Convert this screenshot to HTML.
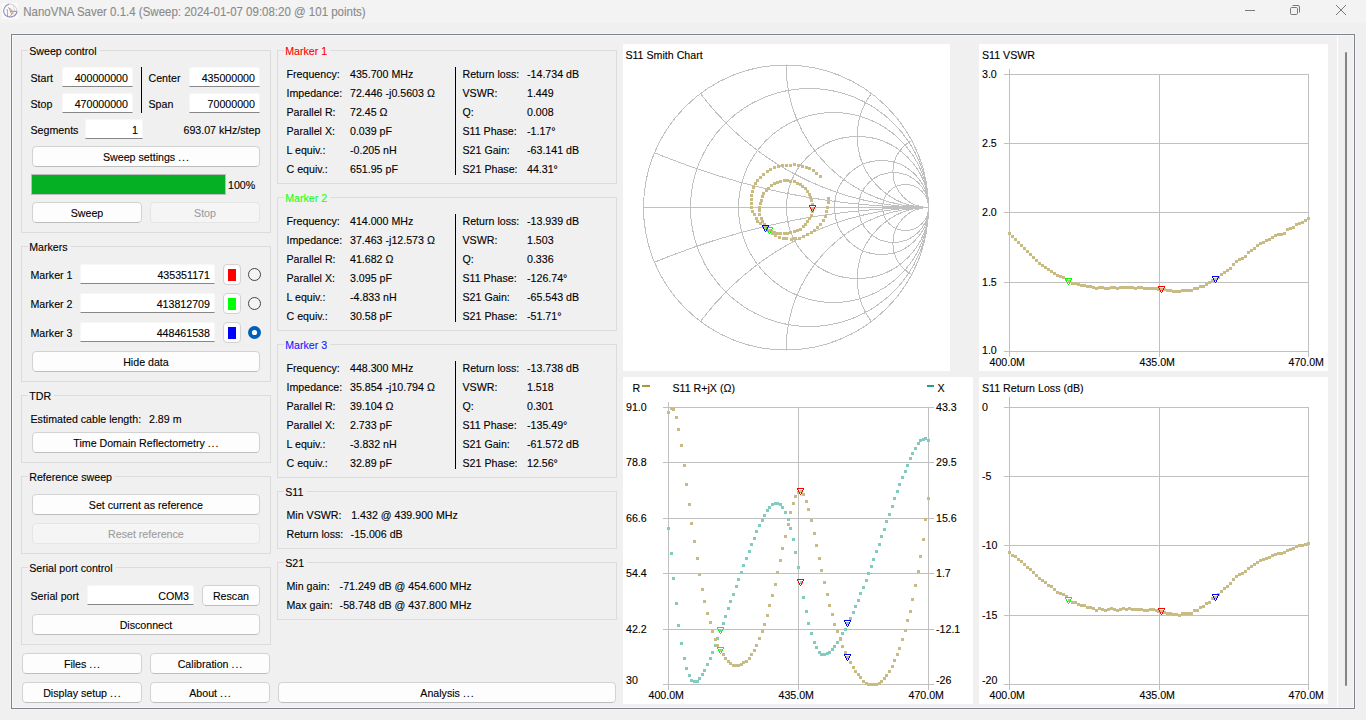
<!DOCTYPE html>
<html><head><meta charset="utf-8"><title>NanoVNA Saver</title>
<style>html,body{margin:0;padding:0;background:#f0f0f0;overflow:hidden}svg{display:block}text{font-family:"Liberation Sans",sans-serif;white-space:pre}</style>
</head><body><svg width="1366" height="720" viewBox="0 0 1366 720"><rect x="0" y="0" width="1366" height="720" fill="#f0f0f0" /><rect x="0" y="0" width="1366" height="23" fill="#f3f3f3" /><g><rect x="2" y="3" width="16" height="16" fill="#fbfbfb" /><path d="M4.2 13.5 A7 7 0 0 1 9 4.1" fill="none" stroke="#9a92c0" stroke-width="1.1"/><path d="M9 4.1 A7 7 0 0 1 17 12" fill="none" stroke="#cfcfcf" stroke-width="1"/><path d="M17 12 A7 7 0 0 1 4.2 13.5" fill="none" stroke="#8c84b4" stroke-width="1.1"/><path d="M10 11.3 H17" stroke="#8c8c8c" stroke-width="1"/><path d="M7 9 Q8 12 7.5 16.5 M8 7.5 Q11 8.5 13 12 Q12 15 9 17" fill="none" stroke="#9a92c0" stroke-width="0.9"/><path d="M13 5.5 Q15 8 14 11 M13 11.3 Q15 14 13.5 17" fill="none" stroke="#d0d0d0" stroke-width="0.9"/><path d="M9.6 8 L10.2 11 L11.8 14.6" fill="none" stroke="#ec9060" stroke-width="1"/></g><text transform="translate(23.30,16.00) scale(0.935,1)" font-size="12.3" fill="#8a8a8a" stroke="#8a8a8a" stroke-width="0.12" >NanoVNA Saver 0.1.4 (Sweep: 2024-01-07 09:08:20 @ 101 points)</text><line x1="1245" y1="10.5" x2="1255" y2="10.5" stroke="#7a7a7a" stroke-width="1"/><rect x="1290.5" y="7.5" width="7" height="7" rx="1.2" fill="none" stroke="#7a7a7a" stroke-width="1"/><path d="M1292.5 5.5 H1298 Q1299.5 5.5 1299.5 7 V12.5" fill="none" stroke="#7a7a7a" stroke-width="1"/><path d="M1336 5 L1346 15 M1346 5 L1336 15" stroke="#7a7a7a" stroke-width="1"/><rect x="11.5" y="34.5" width="1343" height="674" fill="none" stroke="#7e838d" stroke-width="1"/><rect x="21.5" y="50.5" width="249" height="182" fill="none" stroke="#dcdcdc" stroke-width="1"/><rect x="28" y="48" width="71.74141968750001" height="5" fill="#f0f0f0" /><text transform="translate(29.20,55.00) scale(0.935,1)" font-size="11.4" fill="#000" stroke="#000" stroke-width="0.12" >Sweep control</text><text transform="translate(30.50,82.00) scale(0.935,1)" font-size="11.4" fill="#000" stroke="#000" stroke-width="0.12" >Start</text><rect x="62" y="67" width="71" height="20" rx="3" fill="#fff"/><rect x="62.5" y="67.5" width="70" height="19" rx="2.5" fill="none" stroke="#f7f7f7" stroke-width="1"/><line x1="62.5" y1="86.5" x2="132.5" y2="86.5" stroke="#878787" stroke-width="1"/><text transform="translate(74.65,81.50) scale(0.935,1)" font-size="11.4" fill="#000" stroke="#000" stroke-width="0.12" >400000000</text><text transform="translate(30.50,108.00) scale(0.935,1)" font-size="11.4" fill="#000" stroke="#000" stroke-width="0.12" >Stop</text><rect x="62" y="93" width="71" height="20" rx="3" fill="#fff"/><rect x="62.5" y="93.5" width="70" height="19" rx="2.5" fill="none" stroke="#f7f7f7" stroke-width="1"/><line x1="62.5" y1="112.5" x2="132.5" y2="112.5" stroke="#878787" stroke-width="1"/><text transform="translate(74.65,107.50) scale(0.935,1)" font-size="11.4" fill="#000" stroke="#000" stroke-width="0.12" >470000000</text><rect x="141" y="67" width="1" height="46" fill="#000" /><text transform="translate(148.50,82.00) scale(0.935,1)" font-size="11.4" fill="#000" stroke="#000" stroke-width="0.12" >Center</text><rect x="189" y="67" width="71" height="20" rx="3" fill="#fff"/><rect x="189.5" y="67.5" width="70" height="19" rx="2.5" fill="none" stroke="#f7f7f7" stroke-width="1"/><line x1="189.5" y1="86.5" x2="259.5" y2="86.5" stroke="#878787" stroke-width="1"/><text transform="translate(201.65,81.50) scale(0.935,1)" font-size="11.4" fill="#000" stroke="#000" stroke-width="0.12" >435000000</text><text transform="translate(148.50,108.00) scale(0.935,1)" font-size="11.4" fill="#000" stroke="#000" stroke-width="0.12" >Span</text><rect x="189" y="93" width="71" height="20" rx="3" fill="#fff"/><rect x="189.5" y="93.5" width="70" height="19" rx="2.5" fill="none" stroke="#f7f7f7" stroke-width="1"/><line x1="189.5" y1="112.5" x2="259.5" y2="112.5" stroke="#878787" stroke-width="1"/><text transform="translate(207.58,107.50) scale(0.935,1)" font-size="11.4" fill="#000" stroke="#000" stroke-width="0.12" >70000000</text><text transform="translate(30.50,134.00) scale(0.935,1)" font-size="11.4" fill="#000" stroke="#000" stroke-width="0.12" >Segments</text><rect x="85" y="119" width="58" height="20" rx="3" fill="#fff"/><rect x="85.5" y="119.5" width="57" height="19" rx="2.5" fill="none" stroke="#f7f7f7" stroke-width="1"/><line x1="85.5" y1="138.5" x2="142.5" y2="138.5" stroke="#878787" stroke-width="1"/><text transform="translate(132.07,133.50) scale(0.935,1)" font-size="11.4" fill="#000" stroke="#000" stroke-width="0.12" >1</text><text transform="translate(183.48,134.00) scale(0.935,1)" font-size="11.4" fill="#000" stroke="#000" stroke-width="0.12" >693.07 kHz/step</text><rect x="32.5" y="146.5" width="227" height="20" rx="3.5" fill="#fdfdfd" stroke="#d2d2d2" stroke-width="1"/><path d="M35 166.5 H257" stroke="#bdbdbd" stroke-width="1"/><text transform="translate(103.00,160.70) scale(0.935,1)" font-size="11.4" fill="#000" stroke="#000" stroke-width="0.12" >Sweep settings <tspan letter-spacing="1.0">..</tspan>.</text><rect x="31.5" y="174.5" width="194" height="20" fill="#06b025" stroke="#bcbcbc" stroke-width="1"/><text transform="translate(228.00,189.00) scale(0.935,1)" font-size="11.4" fill="#000" stroke="#000" stroke-width="0.12" >100%</text><rect x="32.5" y="202.5" width="109" height="20" rx="3.5" fill="#fdfdfd" stroke="#d2d2d2" stroke-width="1"/><path d="M35 222.5 H139" stroke="#bdbdbd" stroke-width="1"/><text transform="translate(70.71,216.70) scale(0.935,1)" font-size="11.4" fill="#000" stroke="#000" stroke-width="0.12" >Sweep</text><rect x="150.5" y="202.5" width="109" height="20" rx="3.5" fill="#f5f5f5" stroke="#e5e5e5" stroke-width="1"/><text transform="translate(194.04,216.70) scale(0.935,1)" font-size="11.4" fill="#9d9d9d" stroke="#9d9d9d" stroke-width="0.12" >Stop</text><rect x="21.5" y="246.5" width="249" height="135" fill="none" stroke="#dcdcdc" stroke-width="1"/><rect x="28" y="244" width="42.690648281250006" height="5" fill="#f0f0f0" /><text transform="translate(29.20,251.00) scale(0.935,1)" font-size="11.4" fill="#000" stroke="#000" stroke-width="0.12" >Markers</text><text transform="translate(30.50,279.00) scale(0.935,1)" font-size="11.4" fill="#000" stroke="#000" stroke-width="0.12" >Marker 1</text><rect x="80" y="264" width="135" height="20" rx="3" fill="#fff"/><rect x="80.5" y="264.5" width="134" height="19" rx="2.5" fill="none" stroke="#f7f7f7" stroke-width="1"/><line x1="80.5" y1="283.5" x2="214.5" y2="283.5" stroke="#878787" stroke-width="1"/><text transform="translate(157.44,278.50) scale(0.935,1)" font-size="11.4" fill="#000" stroke="#000" stroke-width="0.12" >435351171</text><rect x="223.5" y="264.5" width="17" height="20" rx="3.5" fill="#fdfdfd" stroke="#d2d2d2" stroke-width="1"/><rect x="228" y="269" width="8" height="12" fill="#ff0000" /><circle cx="254.5" cy="274.5" r="6" fill="#fff" fill-opacity="0.3" stroke="#444" stroke-width="1"/><text transform="translate(30.50,308.00) scale(0.935,1)" font-size="11.4" fill="#000" stroke="#000" stroke-width="0.12" >Marker 2</text><rect x="80" y="293" width="135" height="20" rx="3" fill="#fff"/><rect x="80.5" y="293.5" width="134" height="19" rx="2.5" fill="none" stroke="#f7f7f7" stroke-width="1"/><line x1="80.5" y1="312.5" x2="214.5" y2="312.5" stroke="#878787" stroke-width="1"/><text transform="translate(156.65,307.50) scale(0.935,1)" font-size="11.4" fill="#000" stroke="#000" stroke-width="0.12" >413812709</text><rect x="223.5" y="293.5" width="17" height="20" rx="3.5" fill="#fdfdfd" stroke="#d2d2d2" stroke-width="1"/><rect x="228" y="298" width="8" height="12" fill="#00ff00" /><circle cx="254.5" cy="303.5" r="6" fill="#fff" fill-opacity="0.3" stroke="#444" stroke-width="1"/><text transform="translate(30.50,337.00) scale(0.935,1)" font-size="11.4" fill="#000" stroke="#000" stroke-width="0.12" >Marker 3</text><rect x="80" y="322" width="135" height="20" rx="3" fill="#fff"/><rect x="80.5" y="322.5" width="134" height="19" rx="2.5" fill="none" stroke="#f7f7f7" stroke-width="1"/><line x1="80.5" y1="341.5" x2="214.5" y2="341.5" stroke="#878787" stroke-width="1"/><text transform="translate(156.65,336.50) scale(0.935,1)" font-size="11.4" fill="#000" stroke="#000" stroke-width="0.12" >448461538</text><rect x="223.5" y="322.5" width="17" height="20" rx="3.5" fill="#fdfdfd" stroke="#d2d2d2" stroke-width="1"/><rect x="228" y="327" width="8" height="12" fill="#0000ff" /><circle cx="254.5" cy="332.5" r="6.5" fill="#005fb8"/><circle cx="254.5" cy="332.5" r="2.6" fill="#fff"/><rect x="32.5" y="351.5" width="227" height="20" rx="3.5" fill="#fdfdfd" stroke="#d2d2d2" stroke-width="1"/><path d="M35 371.5 H257" stroke="#bdbdbd" stroke-width="1"/><text transform="translate(123.19,365.70) scale(0.935,1)" font-size="11.4" fill="#000" stroke="#000" stroke-width="0.12" >Hide data</text><rect x="21.5" y="395.5" width="249" height="67" fill="none" stroke="#dcdcdc" stroke-width="1"/><rect x="28" y="393" width="26.105910468749997" height="5" fill="#f0f0f0" /><text transform="translate(29.20,400.00) scale(0.935,1)" font-size="11.4" fill="#000" stroke="#000" stroke-width="0.12" >TDR</text><text transform="translate(30.50,422.50) scale(0.935,1)" font-size="11.4" fill="#000" stroke="#000" stroke-width="0.12" >Estimated cable length:</text><text transform="translate(149.00,422.50) scale(0.935,1)" font-size="11.4" fill="#000" stroke="#000" stroke-width="0.12" >2.89 m</text><rect x="32.5" y="432.5" width="227" height="20" rx="3.5" fill="#fdfdfd" stroke="#d2d2d2" stroke-width="1"/><path d="M35 452.5 H257" stroke="#bdbdbd" stroke-width="1"/><text transform="translate(73.30,446.70) scale(0.935,1)" font-size="11.4" fill="#000" stroke="#000" stroke-width="0.12" >Time Domain Reflectometry <tspan letter-spacing="1.0">..</tspan>.</text><rect x="21.5" y="476.5" width="249" height="77" fill="none" stroke="#dcdcdc" stroke-width="1"/><rect x="28" y="474" width="87.14534015625001" height="5" fill="#f0f0f0" /><text transform="translate(29.20,481.00) scale(0.935,1)" font-size="11.4" fill="#000" stroke="#000" stroke-width="0.12" >Reference sweep</text><rect x="32.5" y="494.5" width="227" height="20" rx="3.5" fill="#fdfdfd" stroke="#d2d2d2" stroke-width="1"/><path d="M35 514.5 H257" stroke="#bdbdbd" stroke-width="1"/><text transform="translate(88.83,508.70) scale(0.935,1)" font-size="11.4" fill="#000" stroke="#000" stroke-width="0.12" >Set current as reference</text><rect x="32.5" y="523.5" width="227" height="20" rx="3.5" fill="#f5f5f5" stroke="#e5e5e5" stroke-width="1"/><text transform="translate(108.08,537.70) scale(0.935,1)" font-size="11.4" fill="#9d9d9d" stroke="#9d9d9d" stroke-width="0.12" >Reset reference</text><rect x="21.5" y="567.5" width="249" height="77" fill="none" stroke="#dcdcdc" stroke-width="1"/><rect x="28" y="565" width="87.72825421875002" height="5" fill="#f0f0f0" /><text transform="translate(29.20,572.00) scale(0.935,1)" font-size="11.4" fill="#000" stroke="#000" stroke-width="0.12" >Serial port control</text><text transform="translate(30.50,600.00) scale(0.935,1)" font-size="11.4" fill="#000" stroke="#000" stroke-width="0.12" >Serial port</text><rect x="87" y="585" width="107" height="20" rx="3" fill="#fff"/><rect x="87.5" y="585.5" width="106" height="19" rx="2.5" fill="none" stroke="#f7f7f7" stroke-width="1"/><line x1="87.5" y1="604.5" x2="193.5" y2="604.5" stroke="#878787" stroke-width="1"/><text transform="translate(158.21,599.50) scale(0.935,1)" font-size="11.4" fill="#000" stroke="#000" stroke-width="0.12" >COM3</text><rect x="202.5" y="585.5" width="57" height="20" rx="3.5" fill="#fdfdfd" stroke="#d2d2d2" stroke-width="1"/><path d="M205 605.5 H257" stroke="#bdbdbd" stroke-width="1"/><text transform="translate(212.93,599.70) scale(0.935,1)" font-size="11.4" fill="#000" stroke="#000" stroke-width="0.12" >Rescan</text><rect x="32.5" y="614.5" width="227" height="20" rx="3.5" fill="#fdfdfd" stroke="#d2d2d2" stroke-width="1"/><path d="M35 634.5 H257" stroke="#bdbdbd" stroke-width="1"/><text transform="translate(119.64,628.70) scale(0.935,1)" font-size="11.4" fill="#000" stroke="#000" stroke-width="0.12" >Disconnect</text><rect x="22.5" y="653.5" width="119" height="20" rx="3.5" fill="#fdfdfd" stroke="#d2d2d2" stroke-width="1"/><path d="M25 673.5 H139" stroke="#bdbdbd" stroke-width="1"/><text transform="translate(63.89,667.70) scale(0.935,1)" font-size="11.4" fill="#000" stroke="#000" stroke-width="0.12" >Files <tspan letter-spacing="1.0">..</tspan>.</text><rect x="150.5" y="653.5" width="119" height="20" rx="3.5" fill="#fdfdfd" stroke="#d2d2d2" stroke-width="1"/><path d="M153 673.5 H267" stroke="#bdbdbd" stroke-width="1"/><text transform="translate(177.67,667.70) scale(0.935,1)" font-size="11.4" fill="#000" stroke="#000" stroke-width="0.12" >Calibration <tspan letter-spacing="1.0">..</tspan>.</text><rect x="22.5" y="682.5" width="119" height="20" rx="3.5" fill="#fdfdfd" stroke="#d2d2d2" stroke-width="1"/><path d="M25 702.5 H139" stroke="#bdbdbd" stroke-width="1"/><text transform="translate(43.15,696.70) scale(0.935,1)" font-size="11.4" fill="#000" stroke="#000" stroke-width="0.12" >Display setup <tspan letter-spacing="1.0">..</tspan>.</text><rect x="150.5" y="682.5" width="119" height="20" rx="3.5" fill="#fdfdfd" stroke="#d2d2d2" stroke-width="1"/><path d="M153 702.5 H267" stroke="#bdbdbd" stroke-width="1"/><text transform="translate(189.22,696.70) scale(0.935,1)" font-size="11.4" fill="#000" stroke="#000" stroke-width="0.12" >About <tspan letter-spacing="1.0">..</tspan>.</text><rect x="277.5" y="50.5" width="339" height="133" fill="none" stroke="#dcdcdc" stroke-width="1"/><rect x="284" y="48" width="46.24975499999999" height="5" fill="#f0f0f0" /><text transform="translate(285.20,55.00) scale(0.935,1)" font-size="11.4" fill="#ff0000" stroke="#ff0000" stroke-width="0.12" >Marker 1</text><rect x="455" y="67" width="1" height="108" fill="#000" /><text transform="translate(286.50,78.00) scale(0.935,1)" font-size="11.4" fill="#000" stroke="#000" stroke-width="0.12" >Frequency:</text><text transform="translate(350.00,78.00) scale(0.935,1)" font-size="11.4" fill="#000" stroke="#000" stroke-width="0.12" >435.700 MHz</text><text transform="translate(286.50,97.00) scale(0.935,1)" font-size="11.4" fill="#000" stroke="#000" stroke-width="0.12" >Impedance:</text><text transform="translate(350.00,97.00) scale(0.935,1)" font-size="11.4" fill="#000" stroke="#000" stroke-width="0.12" >72.446 -j0.5603 Ω</text><text transform="translate(286.50,116.00) scale(0.935,1)" font-size="11.4" fill="#000" stroke="#000" stroke-width="0.12" >Parallel R:</text><text transform="translate(350.00,116.00) scale(0.935,1)" font-size="11.4" fill="#000" stroke="#000" stroke-width="0.12" >72.45 Ω</text><text transform="translate(286.50,135.00) scale(0.935,1)" font-size="11.4" fill="#000" stroke="#000" stroke-width="0.12" >Parallel X:</text><text transform="translate(350.00,135.00) scale(0.935,1)" font-size="11.4" fill="#000" stroke="#000" stroke-width="0.12" >0.039 pF</text><text transform="translate(286.50,154.00) scale(0.935,1)" font-size="11.4" fill="#000" stroke="#000" stroke-width="0.12" >L equiv.:</text><text transform="translate(350.00,154.00) scale(0.935,1)" font-size="11.4" fill="#000" stroke="#000" stroke-width="0.12" >-0.205 nH</text><text transform="translate(286.50,173.00) scale(0.935,1)" font-size="11.4" fill="#000" stroke="#000" stroke-width="0.12" >C equiv.:</text><text transform="translate(350.00,173.00) scale(0.935,1)" font-size="11.4" fill="#000" stroke="#000" stroke-width="0.12" >651.95 pF</text><text transform="translate(462.50,78.00) scale(0.935,1)" font-size="11.4" fill="#000" stroke="#000" stroke-width="0.12" >Return loss:</text><text transform="translate(527.00,78.00) scale(0.935,1)" font-size="11.4" fill="#000" stroke="#000" stroke-width="0.12" >-14.734 dB</text><text transform="translate(462.50,97.00) scale(0.935,1)" font-size="11.4" fill="#000" stroke="#000" stroke-width="0.12" >VSWR:</text><text transform="translate(527.00,97.00) scale(0.935,1)" font-size="11.4" fill="#000" stroke="#000" stroke-width="0.12" >1.449</text><text transform="translate(462.50,116.00) scale(0.935,1)" font-size="11.4" fill="#000" stroke="#000" stroke-width="0.12" >Q:</text><text transform="translate(527.00,116.00) scale(0.935,1)" font-size="11.4" fill="#000" stroke="#000" stroke-width="0.12" >0.008</text><text transform="translate(462.50,135.00) scale(0.935,1)" font-size="11.4" fill="#000" stroke="#000" stroke-width="0.12" >S11 Phase:</text><text transform="translate(527.00,135.00) scale(0.935,1)" font-size="11.4" fill="#000" stroke="#000" stroke-width="0.12" >-1.17°</text><text transform="translate(462.50,154.00) scale(0.935,1)" font-size="11.4" fill="#000" stroke="#000" stroke-width="0.12" >S21 Gain:</text><text transform="translate(527.00,154.00) scale(0.935,1)" font-size="11.4" fill="#000" stroke="#000" stroke-width="0.12" >-63.141 dB</text><text transform="translate(462.50,173.00) scale(0.935,1)" font-size="11.4" fill="#000" stroke="#000" stroke-width="0.12" >S21 Phase:</text><text transform="translate(527.00,173.00) scale(0.935,1)" font-size="11.4" fill="#000" stroke="#000" stroke-width="0.12" >44.31°</text><rect x="277.5" y="197.5" width="339" height="133" fill="none" stroke="#dcdcdc" stroke-width="1"/><rect x="284" y="195" width="46.24975499999999" height="5" fill="#f0f0f0" /><text transform="translate(285.20,202.00) scale(0.935,1)" font-size="11.4" fill="#1aff1a" stroke="#1aff1a" stroke-width="0.12" >Marker 2</text><rect x="455" y="214" width="1" height="108" fill="#000" /><text transform="translate(286.50,225.00) scale(0.935,1)" font-size="11.4" fill="#000" stroke="#000" stroke-width="0.12" >Frequency:</text><text transform="translate(350.00,225.00) scale(0.935,1)" font-size="11.4" fill="#000" stroke="#000" stroke-width="0.12" >414.000 MHz</text><text transform="translate(286.50,244.00) scale(0.935,1)" font-size="11.4" fill="#000" stroke="#000" stroke-width="0.12" >Impedance:</text><text transform="translate(350.00,244.00) scale(0.935,1)" font-size="11.4" fill="#000" stroke="#000" stroke-width="0.12" >37.463 -j12.573 Ω</text><text transform="translate(286.50,263.00) scale(0.935,1)" font-size="11.4" fill="#000" stroke="#000" stroke-width="0.12" >Parallel R:</text><text transform="translate(350.00,263.00) scale(0.935,1)" font-size="11.4" fill="#000" stroke="#000" stroke-width="0.12" >41.682 Ω</text><text transform="translate(286.50,282.00) scale(0.935,1)" font-size="11.4" fill="#000" stroke="#000" stroke-width="0.12" >Parallel X:</text><text transform="translate(350.00,282.00) scale(0.935,1)" font-size="11.4" fill="#000" stroke="#000" stroke-width="0.12" >3.095 pF</text><text transform="translate(286.50,301.00) scale(0.935,1)" font-size="11.4" fill="#000" stroke="#000" stroke-width="0.12" >L equiv.:</text><text transform="translate(350.00,301.00) scale(0.935,1)" font-size="11.4" fill="#000" stroke="#000" stroke-width="0.12" >-4.833 nH</text><text transform="translate(286.50,320.00) scale(0.935,1)" font-size="11.4" fill="#000" stroke="#000" stroke-width="0.12" >C equiv.:</text><text transform="translate(350.00,320.00) scale(0.935,1)" font-size="11.4" fill="#000" stroke="#000" stroke-width="0.12" >30.58 pF</text><text transform="translate(462.50,225.00) scale(0.935,1)" font-size="11.4" fill="#000" stroke="#000" stroke-width="0.12" >Return loss:</text><text transform="translate(527.00,225.00) scale(0.935,1)" font-size="11.4" fill="#000" stroke="#000" stroke-width="0.12" >-13.939 dB</text><text transform="translate(462.50,244.00) scale(0.935,1)" font-size="11.4" fill="#000" stroke="#000" stroke-width="0.12" >VSWR:</text><text transform="translate(527.00,244.00) scale(0.935,1)" font-size="11.4" fill="#000" stroke="#000" stroke-width="0.12" >1.503</text><text transform="translate(462.50,263.00) scale(0.935,1)" font-size="11.4" fill="#000" stroke="#000" stroke-width="0.12" >Q:</text><text transform="translate(527.00,263.00) scale(0.935,1)" font-size="11.4" fill="#000" stroke="#000" stroke-width="0.12" >0.336</text><text transform="translate(462.50,282.00) scale(0.935,1)" font-size="11.4" fill="#000" stroke="#000" stroke-width="0.12" >S11 Phase:</text><text transform="translate(527.00,282.00) scale(0.935,1)" font-size="11.4" fill="#000" stroke="#000" stroke-width="0.12" >-126.74°</text><text transform="translate(462.50,301.00) scale(0.935,1)" font-size="11.4" fill="#000" stroke="#000" stroke-width="0.12" >S21 Gain:</text><text transform="translate(527.00,301.00) scale(0.935,1)" font-size="11.4" fill="#000" stroke="#000" stroke-width="0.12" >-65.543 dB</text><text transform="translate(462.50,320.00) scale(0.935,1)" font-size="11.4" fill="#000" stroke="#000" stroke-width="0.12" >S21 Phase:</text><text transform="translate(527.00,320.00) scale(0.935,1)" font-size="11.4" fill="#000" stroke="#000" stroke-width="0.12" >-51.71°</text><rect x="277.5" y="344.5" width="339" height="133" fill="none" stroke="#dcdcdc" stroke-width="1"/><rect x="284" y="342" width="46.24975499999999" height="5" fill="#f0f0f0" /><text transform="translate(285.20,349.00) scale(0.935,1)" font-size="11.4" fill="#1a1aff" stroke="#1a1aff" stroke-width="0.12" >Marker 3</text><rect x="455" y="361" width="1" height="108" fill="#000" /><text transform="translate(286.50,372.00) scale(0.935,1)" font-size="11.4" fill="#000" stroke="#000" stroke-width="0.12" >Frequency:</text><text transform="translate(350.00,372.00) scale(0.935,1)" font-size="11.4" fill="#000" stroke="#000" stroke-width="0.12" >448.300 MHz</text><text transform="translate(286.50,391.00) scale(0.935,1)" font-size="11.4" fill="#000" stroke="#000" stroke-width="0.12" >Impedance:</text><text transform="translate(350.00,391.00) scale(0.935,1)" font-size="11.4" fill="#000" stroke="#000" stroke-width="0.12" >35.854 -j10.794 Ω</text><text transform="translate(286.50,410.00) scale(0.935,1)" font-size="11.4" fill="#000" stroke="#000" stroke-width="0.12" >Parallel R:</text><text transform="translate(350.00,410.00) scale(0.935,1)" font-size="11.4" fill="#000" stroke="#000" stroke-width="0.12" >39.104 Ω</text><text transform="translate(286.50,429.00) scale(0.935,1)" font-size="11.4" fill="#000" stroke="#000" stroke-width="0.12" >Parallel X:</text><text transform="translate(350.00,429.00) scale(0.935,1)" font-size="11.4" fill="#000" stroke="#000" stroke-width="0.12" >2.733 pF</text><text transform="translate(286.50,448.00) scale(0.935,1)" font-size="11.4" fill="#000" stroke="#000" stroke-width="0.12" >L equiv.:</text><text transform="translate(350.00,448.00) scale(0.935,1)" font-size="11.4" fill="#000" stroke="#000" stroke-width="0.12" >-3.832 nH</text><text transform="translate(286.50,467.00) scale(0.935,1)" font-size="11.4" fill="#000" stroke="#000" stroke-width="0.12" >C equiv.:</text><text transform="translate(350.00,467.00) scale(0.935,1)" font-size="11.4" fill="#000" stroke="#000" stroke-width="0.12" >32.89 pF</text><text transform="translate(462.50,372.00) scale(0.935,1)" font-size="11.4" fill="#000" stroke="#000" stroke-width="0.12" >Return loss:</text><text transform="translate(527.00,372.00) scale(0.935,1)" font-size="11.4" fill="#000" stroke="#000" stroke-width="0.12" >-13.738 dB</text><text transform="translate(462.50,391.00) scale(0.935,1)" font-size="11.4" fill="#000" stroke="#000" stroke-width="0.12" >VSWR:</text><text transform="translate(527.00,391.00) scale(0.935,1)" font-size="11.4" fill="#000" stroke="#000" stroke-width="0.12" >1.518</text><text transform="translate(462.50,410.00) scale(0.935,1)" font-size="11.4" fill="#000" stroke="#000" stroke-width="0.12" >Q:</text><text transform="translate(527.00,410.00) scale(0.935,1)" font-size="11.4" fill="#000" stroke="#000" stroke-width="0.12" >0.301</text><text transform="translate(462.50,429.00) scale(0.935,1)" font-size="11.4" fill="#000" stroke="#000" stroke-width="0.12" >S11 Phase:</text><text transform="translate(527.00,429.00) scale(0.935,1)" font-size="11.4" fill="#000" stroke="#000" stroke-width="0.12" >-135.49°</text><text transform="translate(462.50,448.00) scale(0.935,1)" font-size="11.4" fill="#000" stroke="#000" stroke-width="0.12" >S21 Gain:</text><text transform="translate(527.00,448.00) scale(0.935,1)" font-size="11.4" fill="#000" stroke="#000" stroke-width="0.12" >-61.572 dB</text><text transform="translate(462.50,467.00) scale(0.935,1)" font-size="11.4" fill="#000" stroke="#000" stroke-width="0.12" >S21 Phase:</text><text transform="translate(527.00,467.00) scale(0.935,1)" font-size="11.4" fill="#000" stroke="#000" stroke-width="0.12" >12.56°</text><rect x="277.5" y="491.5" width="339" height="57" fill="none" stroke="#dcdcdc" stroke-width="1"/><rect x="284" y="489" width="22.373594999999966" height="5" fill="#f0f0f0" /><text transform="translate(285.20,496.00) scale(0.935,1)" font-size="11.4" fill="#000" stroke="#000" stroke-width="0.12" >S11</text><text transform="translate(286.50,519.00) scale(0.935,1)" font-size="11.4" fill="#000" stroke="#000" stroke-width="0.12" >Min VSWR:</text><text transform="translate(351.20,519.00) scale(0.935,1)" font-size="11.4" fill="#000" stroke="#000" stroke-width="0.12" >1.432 @ 439.900 MHz</text><text transform="translate(286.50,538.00) scale(0.935,1)" font-size="11.4" fill="#000" stroke="#000" stroke-width="0.12" >Return loss:</text><text transform="translate(350.60,538.00) scale(0.935,1)" font-size="11.4" fill="#000" stroke="#000" stroke-width="0.12" >-15.006 dB</text><rect x="277.5" y="562.5" width="339" height="57" fill="none" stroke="#dcdcdc" stroke-width="1"/><rect x="284" y="560" width="23.164692656249997" height="5" fill="#f0f0f0" /><text transform="translate(285.20,567.00) scale(0.935,1)" font-size="11.4" fill="#000" stroke="#000" stroke-width="0.12" >S21</text><text transform="translate(286.50,590.00) scale(0.935,1)" font-size="11.4" fill="#000" stroke="#000" stroke-width="0.12" >Min gain:</text><text transform="translate(339.60,590.00) scale(0.935,1)" font-size="11.4" fill="#000" stroke="#000" stroke-width="0.12" >-71.249 dB @ 454.600 MHz</text><text transform="translate(286.50,609.00) scale(0.935,1)" font-size="11.4" fill="#000" stroke="#000" stroke-width="0.12" >Max gain:</text><text transform="translate(339.60,609.00) scale(0.935,1)" font-size="11.4" fill="#000" stroke="#000" stroke-width="0.12" >-58.748 dB @ 437.800 MHz</text><rect x="278.5" y="682.5" width="337" height="20" rx="3.5" fill="#fdfdfd" stroke="#d2d2d2" stroke-width="1"/><path d="M281 702.5 H613" stroke="#bdbdbd" stroke-width="1"/><text transform="translate(420.30,696.70) scale(0.935,1)" font-size="11.4" fill="#000" stroke="#000" stroke-width="0.12" >Analysis <tspan letter-spacing="1.0">..</tspan>.</text><rect x="623" y="44" width="327" height="327" fill="#fff" /><text transform="translate(625.40,59.00) scale(0.935,1)" font-size="11.4" fill="#000" stroke="#000" stroke-width="0.12" >S11 Smith Chart</text><defs><clipPath id="sc"><circle cx="786.0" cy="207.5" r="143.0"/></clipPath></defs><g fill="none" stroke="#c0c0c0" stroke-width="1" shape-rendering="crispEdges"><line x1="643.5" y1="207.5" x2="928.5" y2="207.5"/><circle cx="786.00" cy="207.5" r="142.50"/><circle cx="809.50" cy="207.5" r="119.00"/><circle cx="833.50" cy="207.5" r="95.00"/><circle cx="857.50" cy="207.5" r="71.00"/><circle cx="881.50" cy="207.5" r="47.00"/><circle cx="893.50" cy="207.5" r="35.00"/><circle cx="905.50" cy="207.5" r="23.00"/><g clip-path="url(#sc)"><circle cx="928.5" cy="-505.00" r="712.50"/><circle cx="928.5" cy="920.00" r="712.50"/><circle cx="928.5" cy="-77.50" r="285.00"/><circle cx="928.5" cy="492.50" r="285.00"/><circle cx="928.5" cy="65.00" r="142.50"/><circle cx="928.5" cy="350.00" r="142.50"/><circle cx="928.5" cy="136.25" r="71.25"/><circle cx="928.5" cy="278.75" r="71.25"/><circle cx="928.5" cy="171.88" r="35.62"/><circle cx="928.5" cy="243.12" r="35.62"/></g></g><path d="M827 197h3v3h-3zM827 201h3v3h-3zM826 206h3v3h-3zM825 210h3v3h-3zM824 215h3v3h-3zM822 219h3v3h-3zM819 223h3v3h-3zM816 226h3v3h-3zM813 229h3v3h-3zM810 231h3v3h-3zM806 233h3v3h-3zM802 235h3v3h-3zM798 237h3v3h-3zM794 237h3v3h-3zM790 238h3v3h-3zM785 237h3v3h-3zM782 237h3v3h-3zM778 236h3v3h-3zM774 234h3v3h-3zM771 232h3v3h-3zM768 229h3v3h-3zM765 226h3v3h-3zM763 223h3v3h-3zM761 220h3v3h-3zM760 217h3v3h-3zM758 213h3v3h-3zM758 209h3v3h-3zM758 206h3v3h-3zM759 202h3v3h-3zM760 199h3v3h-3zM761 195h3v3h-3zM762 192h3v3h-3zM765 189h3v3h-3zM767 187h3v3h-3zM770 184h3v3h-3zM773 182h3v3h-3zM776 181h3v3h-3zM779 180h3v3h-3zM783 179h3v3h-3zM786 179h3v3h-3zM789 180h3v3h-3zM793 180h3v3h-3zM796 182h3v3h-3zM799 183h3v3h-3zM801 185h3v3h-3zM804 187h3v3h-3zM806 190h3v3h-3zM808 193h3v3h-3zM809 196h3v3h-3zM810 199h3v3h-3zM811 203h3v3h-3zM811 207h3v3h-3zM811 210h3v3h-3zM810 214h3v3h-3zM808 217h3v3h-3zM806 220h3v3h-3zM804 223h3v3h-3zM802 225h3v3h-3zM799 228h3v3h-3zM796 229h3v3h-3zM793 230h3v3h-3zM789 231h3v3h-3zM786 232h3v3h-3zM783 232h3v3h-3zM779 232h3v3h-3zM776 232h3v3h-3zM773 231h3v3h-3zM770 230h3v3h-3zM767 229h3v3h-3zM764 227h3v3h-3zM762 225h3v3h-3zM759 222h3v3h-3zM756 220h3v3h-3zM755 217h3v3h-3zM753 213h3v3h-3zM751 210h3v3h-3zM750 206h3v3h-3zM750 202h3v3h-3zM750 198h3v3h-3zM750 194h3v3h-3zM751 190h3v3h-3zM752 186h3v3h-3zM754 182h3v3h-3zM756 179h3v3h-3zM759 176h3v3h-3zM762 173h3v3h-3zM766 170h3v3h-3zM769 168h3v3h-3zM773 166h3v3h-3zM777 165h3v3h-3zM781 164h3v3h-3zM785 164h3v3h-3zM789 164h3v3h-3zM793 163h3v3h-3zM797 164h3v3h-3zM801 165h3v3h-3zM805 166h3v3h-3zM808 167h3v3h-3zM812 169h3v3h-3zM815 172h3v3h-3zM819 175h3v3h-3z" fill="#c9bb84"/><path d="M809 205h1v1h-1zM810 205h1v1h-1zM811 205h1v1h-1zM812 205h1v1h-1zM813 205h1v1h-1zM814 205h1v1h-1zM815 205h1v1h-1zM809 206h1v1h-1zM810 207h1v1h-1zM810 208h1v1h-1zM811 209h1v1h-1zM811 210h1v1h-1zM812 211h1v1h-1zM815 206h1v1h-1zM814 207h1v1h-1zM814 208h1v1h-1zM813 209h1v1h-1zM813 210h1v1h-1z" fill="#ff0000"/><path d="M766 227h1v1h-1zM767 227h1v1h-1zM768 227h1v1h-1zM769 227h1v1h-1zM770 227h1v1h-1zM771 227h1v1h-1zM772 227h1v1h-1zM766 228h1v1h-1zM767 229h1v1h-1zM767 230h1v1h-1zM768 231h1v1h-1zM768 232h1v1h-1zM769 233h1v1h-1zM772 228h1v1h-1zM771 229h1v1h-1zM771 230h1v1h-1zM770 231h1v1h-1zM770 232h1v1h-1z" fill="#00ff00"/><path d="M762 225h1v1h-1zM763 225h1v1h-1zM764 225h1v1h-1zM765 225h1v1h-1zM766 225h1v1h-1zM767 225h1v1h-1zM768 225h1v1h-1zM762 226h1v1h-1zM763 227h1v1h-1zM763 228h1v1h-1zM764 229h1v1h-1zM764 230h1v1h-1zM765 231h1v1h-1zM768 226h1v1h-1zM767 227h1v1h-1zM767 228h1v1h-1zM766 229h1v1h-1zM766 230h1v1h-1z" fill="#0000ff"/><rect x="979" y="44" width="349" height="327" fill="#fff" /><text transform="translate(982.00,59.00) scale(0.935,1)" font-size="11.4" fill="#000" stroke="#000" stroke-width="0.12" >S11 VSWR</text><g stroke="#c0c0c0" stroke-width="1" fill="none"><line x1="1004" y1="74.5" x2="1309" y2="74.5"/><line x1="1004" y1="143.5" x2="1309" y2="143.5"/><line x1="1004" y1="212.5" x2="1309" y2="212.5"/><line x1="1004" y1="282.5" x2="1309" y2="282.5"/><line x1="1004" y1="351.5" x2="1309" y2="351.5"/><line x1="1009.5" y1="69" x2="1009.5" y2="357"/><line x1="1159.5" y1="74" x2="1159.5" y2="357"/><line x1="1308.5" y1="74" x2="1308.5" y2="357"/></g><text transform="translate(982.00,78.00) scale(0.935,1)" font-size="11.4" fill="#000" stroke="#000" stroke-width="0.12" >3.0</text><text transform="translate(982.00,147.00) scale(0.935,1)" font-size="11.4" fill="#000" stroke="#000" stroke-width="0.12" >2.5</text><text transform="translate(982.00,216.00) scale(0.935,1)" font-size="11.4" fill="#000" stroke="#000" stroke-width="0.12" >2.0</text><text transform="translate(982.00,286.00) scale(0.935,1)" font-size="11.4" fill="#000" stroke="#000" stroke-width="0.12" >1.5</text><text transform="translate(982.00,354.00) scale(0.935,1)" font-size="11.4" fill="#000" stroke="#000" stroke-width="0.12" >1.0</text><text transform="translate(989.50,366.00) scale(0.935,1)" font-size="11.4" fill="#000" stroke="#000" stroke-width="0.12" >400.0M</text><text transform="translate(1139.50,366.00) scale(0.935,1)" font-size="11.4" fill="#000" stroke="#000" stroke-width="0.12" >435.0M</text><text transform="translate(1288.50,366.00) scale(0.935,1)" font-size="11.4" fill="#000" stroke="#000" stroke-width="0.12" >470.0M</text><path d="M1008 232h3v3h-3zM1011 235h3v3h-3zM1014 238h3v3h-3zM1017 241h3v3h-3zM1020 244h3v3h-3zM1023 247h3v3h-3zM1026 250h3v3h-3zM1029 253h3v3h-3zM1032 256h3v3h-3zM1035 259h3v3h-3zM1038 262h3v3h-3zM1041 264h3v3h-3zM1044 266h3v3h-3zM1047 268h3v3h-3zM1050 270h3v3h-3zM1053 272h3v3h-3zM1056 274h3v3h-3zM1059 275h3v3h-3zM1062 276h3v3h-3zM1065 278h3v3h-3zM1068 280h3v3h-3zM1071 282h3v3h-3zM1074 282h3v3h-3zM1077 283h3v3h-3zM1080 284h3v3h-3zM1083 284h3v3h-3zM1086 285h3v3h-3zM1089 285h3v3h-3zM1092 286h3v3h-3zM1095 287h3v3h-3zM1098 286h3v3h-3zM1101 286h3v3h-3zM1104 287h3v3h-3zM1107 287h3v3h-3zM1110 286h3v3h-3zM1113 286h3v3h-3zM1116 287h3v3h-3zM1119 286h3v3h-3zM1122 286h3v3h-3zM1125 286h3v3h-3zM1128 286h3v3h-3zM1131 286h3v3h-3zM1134 287h3v3h-3zM1137 286h3v3h-3zM1140 286h3v3h-3zM1143 287h3v3h-3zM1146 287h3v3h-3zM1149 287h3v3h-3zM1152 287h3v3h-3zM1155 287h3v3h-3zM1157 288h3v3h-3zM1160 288h3v3h-3zM1163 288h3v3h-3zM1166 289h3v3h-3zM1169 289h3v3h-3zM1172 290h3v3h-3zM1175 290h3v3h-3zM1178 290h3v3h-3zM1181 289h3v3h-3zM1184 289h3v3h-3zM1187 289h3v3h-3zM1190 289h3v3h-3zM1193 287h3v3h-3zM1196 287h3v3h-3zM1199 285h3v3h-3zM1202 285h3v3h-3zM1205 283h3v3h-3zM1208 281h3v3h-3zM1211 279h3v3h-3zM1214 278h3v3h-3zM1217 276h3v3h-3zM1220 273h3v3h-3zM1223 271h3v3h-3zM1226 269h3v3h-3zM1229 267h3v3h-3zM1232 263h3v3h-3zM1235 260h3v3h-3zM1238 258h3v3h-3zM1241 257h3v3h-3zM1244 255h3v3h-3zM1247 251h3v3h-3zM1250 249h3v3h-3zM1253 247h3v3h-3zM1256 244h3v3h-3zM1259 242h3v3h-3zM1262 241h3v3h-3zM1265 239h3v3h-3zM1268 238h3v3h-3zM1271 236h3v3h-3zM1274 234h3v3h-3zM1277 233h3v3h-3zM1280 233h3v3h-3zM1283 232h3v3h-3zM1286 228h3v3h-3zM1289 227h3v3h-3zM1292 226h3v3h-3zM1295 223h3v3h-3zM1298 222h3v3h-3zM1301 221h3v3h-3zM1304 219h3v3h-3zM1307 217h3v3h-3z" fill="#c9bb84"/><path d="M1158 286h1v1h-1zM1159 286h1v1h-1zM1160 286h1v1h-1zM1161 286h1v1h-1zM1162 286h1v1h-1zM1163 286h1v1h-1zM1164 286h1v1h-1zM1158 287h1v1h-1zM1159 288h1v1h-1zM1159 289h1v1h-1zM1160 290h1v1h-1zM1160 291h1v1h-1zM1161 292h1v1h-1zM1164 287h1v1h-1zM1163 288h1v1h-1zM1163 289h1v1h-1zM1162 290h1v1h-1zM1162 291h1v1h-1z" fill="#ff0000"/><path d="M1065 278h1v1h-1zM1066 278h1v1h-1zM1067 278h1v1h-1zM1068 278h1v1h-1zM1069 278h1v1h-1zM1070 278h1v1h-1zM1071 278h1v1h-1zM1065 279h1v1h-1zM1066 280h1v1h-1zM1066 281h1v1h-1zM1067 282h1v1h-1zM1067 283h1v1h-1zM1068 284h1v1h-1zM1071 279h1v1h-1zM1070 280h1v1h-1zM1070 281h1v1h-1zM1069 282h1v1h-1zM1069 283h1v1h-1z" fill="#00ff00"/><path d="M1212 276h1v1h-1zM1213 276h1v1h-1zM1214 276h1v1h-1zM1215 276h1v1h-1zM1216 276h1v1h-1zM1217 276h1v1h-1zM1218 276h1v1h-1zM1212 277h1v1h-1zM1213 278h1v1h-1zM1213 279h1v1h-1zM1214 280h1v1h-1zM1214 281h1v1h-1zM1215 282h1v1h-1zM1218 277h1v1h-1zM1217 278h1v1h-1zM1217 279h1v1h-1zM1216 280h1v1h-1zM1216 281h1v1h-1z" fill="#0000ff"/><rect x="979" y="377" width="349" height="327" fill="#fff" /><text transform="translate(982.00,392.00) scale(0.935,1)" font-size="11.4" fill="#000" stroke="#000" stroke-width="0.12" >S11 Return Loss (dB)</text><g stroke="#c0c0c0" stroke-width="1" fill="none"><line x1="1004" y1="407.5" x2="1309" y2="407.5"/><line x1="1004" y1="476.5" x2="1309" y2="476.5"/><line x1="1004" y1="545.5" x2="1309" y2="545.5"/><line x1="1004" y1="615.5" x2="1309" y2="615.5"/><line x1="1004" y1="684.5" x2="1309" y2="684.5"/><line x1="1009.5" y1="397" x2="1009.5" y2="690"/><line x1="1159.5" y1="407" x2="1159.5" y2="690"/><line x1="1308.5" y1="407" x2="1308.5" y2="690"/></g><text transform="translate(982.00,411.00) scale(0.935,1)" font-size="11.4" fill="#000" stroke="#000" stroke-width="0.12" >0</text><text transform="translate(982.00,480.00) scale(0.935,1)" font-size="11.4" fill="#000" stroke="#000" stroke-width="0.12" >-5</text><text transform="translate(982.00,549.00) scale(0.935,1)" font-size="11.4" fill="#000" stroke="#000" stroke-width="0.12" >-10</text><text transform="translate(982.00,619.00) scale(0.935,1)" font-size="11.4" fill="#000" stroke="#000" stroke-width="0.12" >-15</text><text transform="translate(982.00,684.00) scale(0.935,1)" font-size="11.4" fill="#000" stroke="#000" stroke-width="0.12" >-20</text><text transform="translate(989.50,699.00) scale(0.935,1)" font-size="11.4" fill="#000" stroke="#000" stroke-width="0.12" >400.0M</text><text transform="translate(1139.50,699.00) scale(0.935,1)" font-size="11.4" fill="#000" stroke="#000" stroke-width="0.12" >435.0M</text><text transform="translate(1288.50,699.00) scale(0.935,1)" font-size="11.4" fill="#000" stroke="#000" stroke-width="0.12" >470.0M</text><path d="M1008 551h3v3h-3zM1011 554h3v3h-3zM1014 555h3v3h-3zM1017 558h3v3h-3zM1020 560h3v3h-3zM1023 563h3v3h-3zM1026 566h3v3h-3zM1029 568h3v3h-3zM1032 571h3v3h-3zM1035 574h3v3h-3zM1038 577h3v3h-3zM1041 579h3v3h-3zM1044 581h3v3h-3zM1047 584h3v3h-3zM1050 585h3v3h-3zM1053 588h3v3h-3zM1056 591h3v3h-3zM1059 592h3v3h-3zM1062 593h3v3h-3zM1065 595h3v3h-3zM1068 599h3v3h-3zM1071 601h3v3h-3zM1074 601h3v3h-3zM1077 603h3v3h-3zM1080 604h3v3h-3zM1083 604h3v3h-3zM1086 606h3v3h-3zM1089 606h3v3h-3zM1092 607h3v3h-3zM1095 609h3v3h-3zM1098 607h3v3h-3zM1101 608h3v3h-3zM1104 609h3v3h-3zM1107 608h3v3h-3zM1110 607h3v3h-3zM1113 608h3v3h-3zM1116 609h3v3h-3zM1119 608h3v3h-3zM1122 607h3v3h-3zM1125 608h3v3h-3zM1128 607h3v3h-3zM1131 608h3v3h-3zM1134 608h3v3h-3zM1137 608h3v3h-3zM1140 608h3v3h-3zM1143 609h3v3h-3zM1146 609h3v3h-3zM1149 608h3v3h-3zM1152 608h3v3h-3zM1155 609h3v3h-3zM1157 610h3v3h-3zM1160 610h3v3h-3zM1163 611h3v3h-3zM1166 612h3v3h-3zM1169 612h3v3h-3zM1172 613h3v3h-3zM1175 613h3v3h-3zM1178 614h3v3h-3zM1181 612h3v3h-3zM1184 612h3v3h-3zM1187 612h3v3h-3zM1190 612h3v3h-3zM1193 609h3v3h-3zM1196 609h3v3h-3zM1199 606h3v3h-3zM1202 605h3v3h-3zM1205 602h3v3h-3zM1208 601h3v3h-3zM1211 597h3v3h-3zM1214 596h3v3h-3zM1217 593h3v3h-3zM1220 590h3v3h-3zM1223 587h3v3h-3zM1226 585h3v3h-3zM1229 582h3v3h-3zM1232 578h3v3h-3zM1235 575h3v3h-3zM1238 573h3v3h-3zM1241 572h3v3h-3zM1244 570h3v3h-3zM1247 567h3v3h-3zM1250 565h3v3h-3zM1253 563h3v3h-3zM1256 561h3v3h-3zM1259 559h3v3h-3zM1262 558h3v3h-3zM1265 557h3v3h-3zM1268 556h3v3h-3zM1271 554h3v3h-3zM1274 553h3v3h-3zM1277 552h3v3h-3zM1280 552h3v3h-3zM1283 551h3v3h-3zM1286 549h3v3h-3zM1289 548h3v3h-3zM1292 547h3v3h-3zM1295 545h3v3h-3zM1298 544h3v3h-3zM1301 544h3v3h-3zM1304 543h3v3h-3zM1307 542h3v3h-3z" fill="#c9bb84"/><path d="M1158 608h1v1h-1zM1159 608h1v1h-1zM1160 608h1v1h-1zM1161 608h1v1h-1zM1162 608h1v1h-1zM1163 608h1v1h-1zM1164 608h1v1h-1zM1158 609h1v1h-1zM1159 610h1v1h-1zM1159 611h1v1h-1zM1160 612h1v1h-1zM1160 613h1v1h-1zM1161 614h1v1h-1zM1164 609h1v1h-1zM1163 610h1v1h-1zM1163 611h1v1h-1zM1162 612h1v1h-1zM1162 613h1v1h-1z" fill="#ff0000"/><path d="M1065 597h1v1h-1zM1066 597h1v1h-1zM1067 597h1v1h-1zM1068 597h1v1h-1zM1069 597h1v1h-1zM1070 597h1v1h-1zM1071 597h1v1h-1zM1065 598h1v1h-1zM1066 599h1v1h-1zM1066 600h1v1h-1zM1067 601h1v1h-1zM1067 602h1v1h-1zM1068 603h1v1h-1zM1071 598h1v1h-1zM1070 599h1v1h-1zM1070 600h1v1h-1zM1069 601h1v1h-1zM1069 602h1v1h-1z" fill="#00ff00"/><path d="M1212 594h1v1h-1zM1213 594h1v1h-1zM1214 594h1v1h-1zM1215 594h1v1h-1zM1216 594h1v1h-1zM1217 594h1v1h-1zM1218 594h1v1h-1zM1212 595h1v1h-1zM1213 596h1v1h-1zM1213 597h1v1h-1zM1214 598h1v1h-1zM1214 599h1v1h-1zM1215 600h1v1h-1zM1218 595h1v1h-1zM1217 596h1v1h-1zM1217 597h1v1h-1zM1216 598h1v1h-1zM1216 599h1v1h-1z" fill="#0000ff"/><rect x="623" y="377" width="350" height="327" fill="#fff" /><text transform="translate(672.50,392.00) scale(0.935,1)" font-size="11.4" fill="#000" stroke="#000" stroke-width="0.12" >S11 R+jX (Ω)</text><text transform="translate(632.50,392.00) scale(0.935,1)" font-size="11.4" fill="#000" stroke="#000" stroke-width="0.12" >R</text><rect x="642" y="385" width="8" height="2" fill="#a89838" /><text transform="translate(937.50,392.00) scale(0.935,1)" font-size="11.4" fill="#000" stroke="#000" stroke-width="0.12" >X</text><rect x="927" y="385" width="7" height="2" fill="#1fa08a" /><g stroke="#c0c0c0" stroke-width="1" fill="none"><line x1="663" y1="407.5" x2="934" y2="407.5"/><line x1="663" y1="462.5" x2="934" y2="462.5"/><line x1="663" y1="518.5" x2="934" y2="518.5"/><line x1="663" y1="573.5" x2="934" y2="573.5"/><line x1="663" y1="629.5" x2="934" y2="629.5"/><line x1="663" y1="684.5" x2="934" y2="684.5"/><line x1="668.5" y1="402" x2="668.5" y2="690"/><line x1="798.5" y1="407" x2="798.5" y2="690"/><line x1="928.5" y1="407" x2="928.5" y2="690"/></g><text transform="translate(626.00,411.00) scale(0.935,1)" font-size="11.4" fill="#000" stroke="#000" stroke-width="0.12" >91.0</text><text transform="translate(936.00,411.00) scale(0.935,1)" font-size="11.4" fill="#000" stroke="#000" stroke-width="0.12" >43.3</text><text transform="translate(626.00,466.00) scale(0.935,1)" font-size="11.4" fill="#000" stroke="#000" stroke-width="0.12" >78.8</text><text transform="translate(936.00,466.00) scale(0.935,1)" font-size="11.4" fill="#000" stroke="#000" stroke-width="0.12" >29.5</text><text transform="translate(626.00,522.00) scale(0.935,1)" font-size="11.4" fill="#000" stroke="#000" stroke-width="0.12" >66.6</text><text transform="translate(936.00,522.00) scale(0.935,1)" font-size="11.4" fill="#000" stroke="#000" stroke-width="0.12" >15.6</text><text transform="translate(626.00,577.00) scale(0.935,1)" font-size="11.4" fill="#000" stroke="#000" stroke-width="0.12" >54.4</text><text transform="translate(936.00,577.00) scale(0.935,1)" font-size="11.4" fill="#000" stroke="#000" stroke-width="0.12" >1.7</text><text transform="translate(626.00,633.00) scale(0.935,1)" font-size="11.4" fill="#000" stroke="#000" stroke-width="0.12" >42.2</text><text transform="translate(936.00,633.00) scale(0.935,1)" font-size="11.4" fill="#000" stroke="#000" stroke-width="0.12" >-12.1</text><text transform="translate(626.00,684.00) scale(0.935,1)" font-size="11.4" fill="#000" stroke="#000" stroke-width="0.12" >30</text><text transform="translate(936.00,684.00) scale(0.935,1)" font-size="11.4" fill="#000" stroke="#000" stroke-width="0.12" >-26</text><text transform="translate(648.50,699.00) scale(0.935,1)" font-size="11.4" fill="#000" stroke="#000" stroke-width="0.12" >400.0M</text><text transform="translate(778.50,699.00) scale(0.935,1)" font-size="11.4" fill="#000" stroke="#000" stroke-width="0.12" >435.0M</text><text transform="translate(908.50,699.00) scale(0.935,1)" font-size="11.4" fill="#000" stroke="#000" stroke-width="0.12" >470.0M</text><path d="M667 527h3v3h-3zM670 552h3v3h-3zM672 577h3v3h-3zM675 602h3v3h-3zM677 624h3v3h-3zM680 642h3v3h-3zM683 657h3v3h-3zM685 667h3v3h-3zM688 674h3v3h-3zM690 679h3v3h-3zM693 680h3v3h-3zM696 680h3v3h-3zM698 677h3v3h-3zM701 673h3v3h-3zM703 669h3v3h-3zM706 663h3v3h-3zM709 657h3v3h-3zM711 651h3v3h-3zM714 644h3v3h-3zM716 637h3v3h-3zM719 629h3v3h-3zM722 622h3v3h-3zM724 615h3v3h-3zM727 607h3v3h-3zM729 600h3v3h-3zM732 593h3v3h-3zM735 585h3v3h-3zM737 578h3v3h-3zM740 571h3v3h-3zM742 564h3v3h-3zM745 557h3v3h-3zM748 550h3v3h-3zM750 543h3v3h-3zM753 537h3v3h-3zM755 530h3v3h-3zM758 524h3v3h-3zM761 519h3v3h-3zM763 514h3v3h-3zM766 509h3v3h-3zM768 506h3v3h-3zM771 503h3v3h-3zM774 502h3v3h-3zM776 502h3v3h-3zM779 503h3v3h-3zM781 506h3v3h-3zM784 511h3v3h-3zM787 518h3v3h-3zM789 527h3v3h-3zM792 538h3v3h-3zM794 551h3v3h-3zM797 566h3v3h-3zM800 581h3v3h-3zM802 596h3v3h-3zM805 610h3v3h-3zM807 622h3v3h-3zM810 632h3v3h-3zM813 641h3v3h-3zM815 646h3v3h-3zM818 651h3v3h-3zM820 653h3v3h-3zM823 653h3v3h-3zM826 652h3v3h-3zM828 651h3v3h-3zM831 648h3v3h-3zM833 645h3v3h-3zM836 641h3v3h-3zM839 637h3v3h-3zM841 632h3v3h-3zM844 628h3v3h-3zM846 622h3v3h-3zM849 617h3v3h-3zM852 611h3v3h-3zM854 605h3v3h-3zM857 599h3v3h-3zM859 592h3v3h-3zM862 586h3v3h-3zM865 579h3v3h-3zM867 572h3v3h-3zM870 565h3v3h-3zM872 558h3v3h-3zM875 550h3v3h-3zM878 543h3v3h-3zM880 535h3v3h-3zM883 528h3v3h-3zM885 520h3v3h-3zM888 513h3v3h-3zM891 505h3v3h-3zM893 497h3v3h-3zM896 490h3v3h-3zM898 483h3v3h-3zM901 476h3v3h-3zM904 470h3v3h-3zM906 464h3v3h-3zM909 457h3v3h-3zM911 452h3v3h-3zM914 447h3v3h-3zM917 442h3v3h-3zM919 439h3v3h-3zM922 438h3v3h-3zM924 437h3v3h-3zM927 439h3v3h-3z" fill="#82cbbf"/><path d="M667 411h3v3h-3zM670 407h3v3h-3zM672 408h3v3h-3zM675 416h3v3h-3zM677 428h3v3h-3zM680 444h3v3h-3zM683 464h3v3h-3zM685 483h3v3h-3zM688 503h3v3h-3zM690 522h3v3h-3zM693 540h3v3h-3zM696 557h3v3h-3zM698 573h3v3h-3zM701 588h3v3h-3zM703 600h3v3h-3zM706 612h3v3h-3zM709 621h3v3h-3zM711 630h3v3h-3zM714 638h3v3h-3zM716 644h3v3h-3zM719 649h3v3h-3zM722 653h3v3h-3zM724 657h3v3h-3zM727 660h3v3h-3zM729 662h3v3h-3zM732 664h3v3h-3zM735 664h3v3h-3zM737 664h3v3h-3zM740 663h3v3h-3zM742 661h3v3h-3zM745 660h3v3h-3zM748 657h3v3h-3zM750 653h3v3h-3zM753 649h3v3h-3zM755 644h3v3h-3zM758 637h3v3h-3zM761 630h3v3h-3zM763 623h3v3h-3zM766 614h3v3h-3zM768 604h3v3h-3zM771 594h3v3h-3zM774 583h3v3h-3zM776 571h3v3h-3zM779 559h3v3h-3zM781 547h3v3h-3zM784 535h3v3h-3zM787 523h3v3h-3zM789 511h3v3h-3zM792 502h3v3h-3zM794 495h3v3h-3zM797 491h3v3h-3zM800 490h3v3h-3zM802 493h3v3h-3zM805 500h3v3h-3zM807 508h3v3h-3zM810 519h3v3h-3zM813 532h3v3h-3zM815 544h3v3h-3zM818 557h3v3h-3zM820 569h3v3h-3zM823 581h3v3h-3zM826 593h3v3h-3zM828 604h3v3h-3zM831 613h3v3h-3zM833 623h3v3h-3zM836 630h3v3h-3zM839 638h3v3h-3zM841 645h3v3h-3zM844 651h3v3h-3zM846 656h3v3h-3zM849 661h3v3h-3zM852 666h3v3h-3zM854 670h3v3h-3zM857 673h3v3h-3zM859 676h3v3h-3zM862 680h3v3h-3zM865 682h3v3h-3zM867 683h3v3h-3zM870 683h3v3h-3zM872 683h3v3h-3zM875 683h3v3h-3zM878 682h3v3h-3zM880 680h3v3h-3zM883 677h3v3h-3zM885 674h3v3h-3zM888 670h3v3h-3zM891 665h3v3h-3zM893 659h3v3h-3zM896 653h3v3h-3zM898 647h3v3h-3zM901 638h3v3h-3zM904 629h3v3h-3zM906 619h3v3h-3zM909 610h3v3h-3zM911 598h3v3h-3zM914 584h3v3h-3zM917 570h3v3h-3zM919 555h3v3h-3zM922 538h3v3h-3zM924 518h3v3h-3zM927 497h3v3h-3z" fill="#c9bb84"/><path d="M797 488h1v1h-1zM798 488h1v1h-1zM799 488h1v1h-1zM800 488h1v1h-1zM801 488h1v1h-1zM802 488h1v1h-1zM803 488h1v1h-1zM797 489h1v1h-1zM798 490h1v1h-1zM798 491h1v1h-1zM799 492h1v1h-1zM799 493h1v1h-1zM800 494h1v1h-1zM803 489h1v1h-1zM802 490h1v1h-1zM802 491h1v1h-1zM801 492h1v1h-1zM801 493h1v1h-1z" fill="#ff0000"/><path d="M797 579h1v1h-1zM798 579h1v1h-1zM799 579h1v1h-1zM800 579h1v1h-1zM801 579h1v1h-1zM802 579h1v1h-1zM803 579h1v1h-1zM797 580h1v1h-1zM798 581h1v1h-1zM798 582h1v1h-1zM799 583h1v1h-1zM799 584h1v1h-1zM800 585h1v1h-1zM803 580h1v1h-1zM802 581h1v1h-1zM802 582h1v1h-1zM801 583h1v1h-1zM801 584h1v1h-1z" fill="#ff0000"/><path d="M717 647h1v1h-1zM718 647h1v1h-1zM719 647h1v1h-1zM720 647h1v1h-1zM721 647h1v1h-1zM722 647h1v1h-1zM723 647h1v1h-1zM717 648h1v1h-1zM718 649h1v1h-1zM718 650h1v1h-1zM719 651h1v1h-1zM719 652h1v1h-1zM720 653h1v1h-1zM723 648h1v1h-1zM722 649h1v1h-1zM722 650h1v1h-1zM721 651h1v1h-1zM721 652h1v1h-1z" fill="#00ff00"/><path d="M717 627h1v1h-1zM718 627h1v1h-1zM719 627h1v1h-1zM720 627h1v1h-1zM721 627h1v1h-1zM722 627h1v1h-1zM723 627h1v1h-1zM717 628h1v1h-1zM718 629h1v1h-1zM718 630h1v1h-1zM719 631h1v1h-1zM719 632h1v1h-1zM720 633h1v1h-1zM723 628h1v1h-1zM722 629h1v1h-1zM722 630h1v1h-1zM721 631h1v1h-1zM721 632h1v1h-1z" fill="#00ff00"/><path d="M844 654h1v1h-1zM845 654h1v1h-1zM846 654h1v1h-1zM847 654h1v1h-1zM848 654h1v1h-1zM849 654h1v1h-1zM850 654h1v1h-1zM844 655h1v1h-1zM845 656h1v1h-1zM845 657h1v1h-1zM846 658h1v1h-1zM846 659h1v1h-1zM847 660h1v1h-1zM850 655h1v1h-1zM849 656h1v1h-1zM849 657h1v1h-1zM848 658h1v1h-1zM848 659h1v1h-1z" fill="#0000ff"/><path d="M844 620h1v1h-1zM845 620h1v1h-1zM846 620h1v1h-1zM847 620h1v1h-1zM848 620h1v1h-1zM849 620h1v1h-1zM850 620h1v1h-1zM844 621h1v1h-1zM845 622h1v1h-1zM845 623h1v1h-1zM846 624h1v1h-1zM846 625h1v1h-1zM847 626h1v1h-1zM850 621h1v1h-1zM849 622h1v1h-1zM849 623h1v1h-1zM848 624h1v1h-1zM848 625h1v1h-1z" fill="#0000ff"/><rect x="1337" y="35" width="1" height="673" fill="#ffffff" /><rect x="1345" y="52" width="2" height="634" fill="#858585" rx="1" /><rect x="12" y="35" width="1342" height="1" fill="#f8f8f8" /><rect x="1353" y="35" width="1" height="673" fill="#f8f8f8" /><rect x="12" y="35" width="1" height="673" fill="#f8f8f8" /><rect x="12" y="707" width="1342" height="1" fill="#f8f8f8" /><rect x="11" y="33" width="1345" height="1" fill="#f5f5f5" /><rect x="11" y="709" width="1345" height="1" fill="#f5f5f5" /><rect x="10" y="34" width="1" height="675" fill="#f5f5f5" /><rect x="1355" y="34" width="1" height="675" fill="#f5f5f5" /></svg></body></html>
